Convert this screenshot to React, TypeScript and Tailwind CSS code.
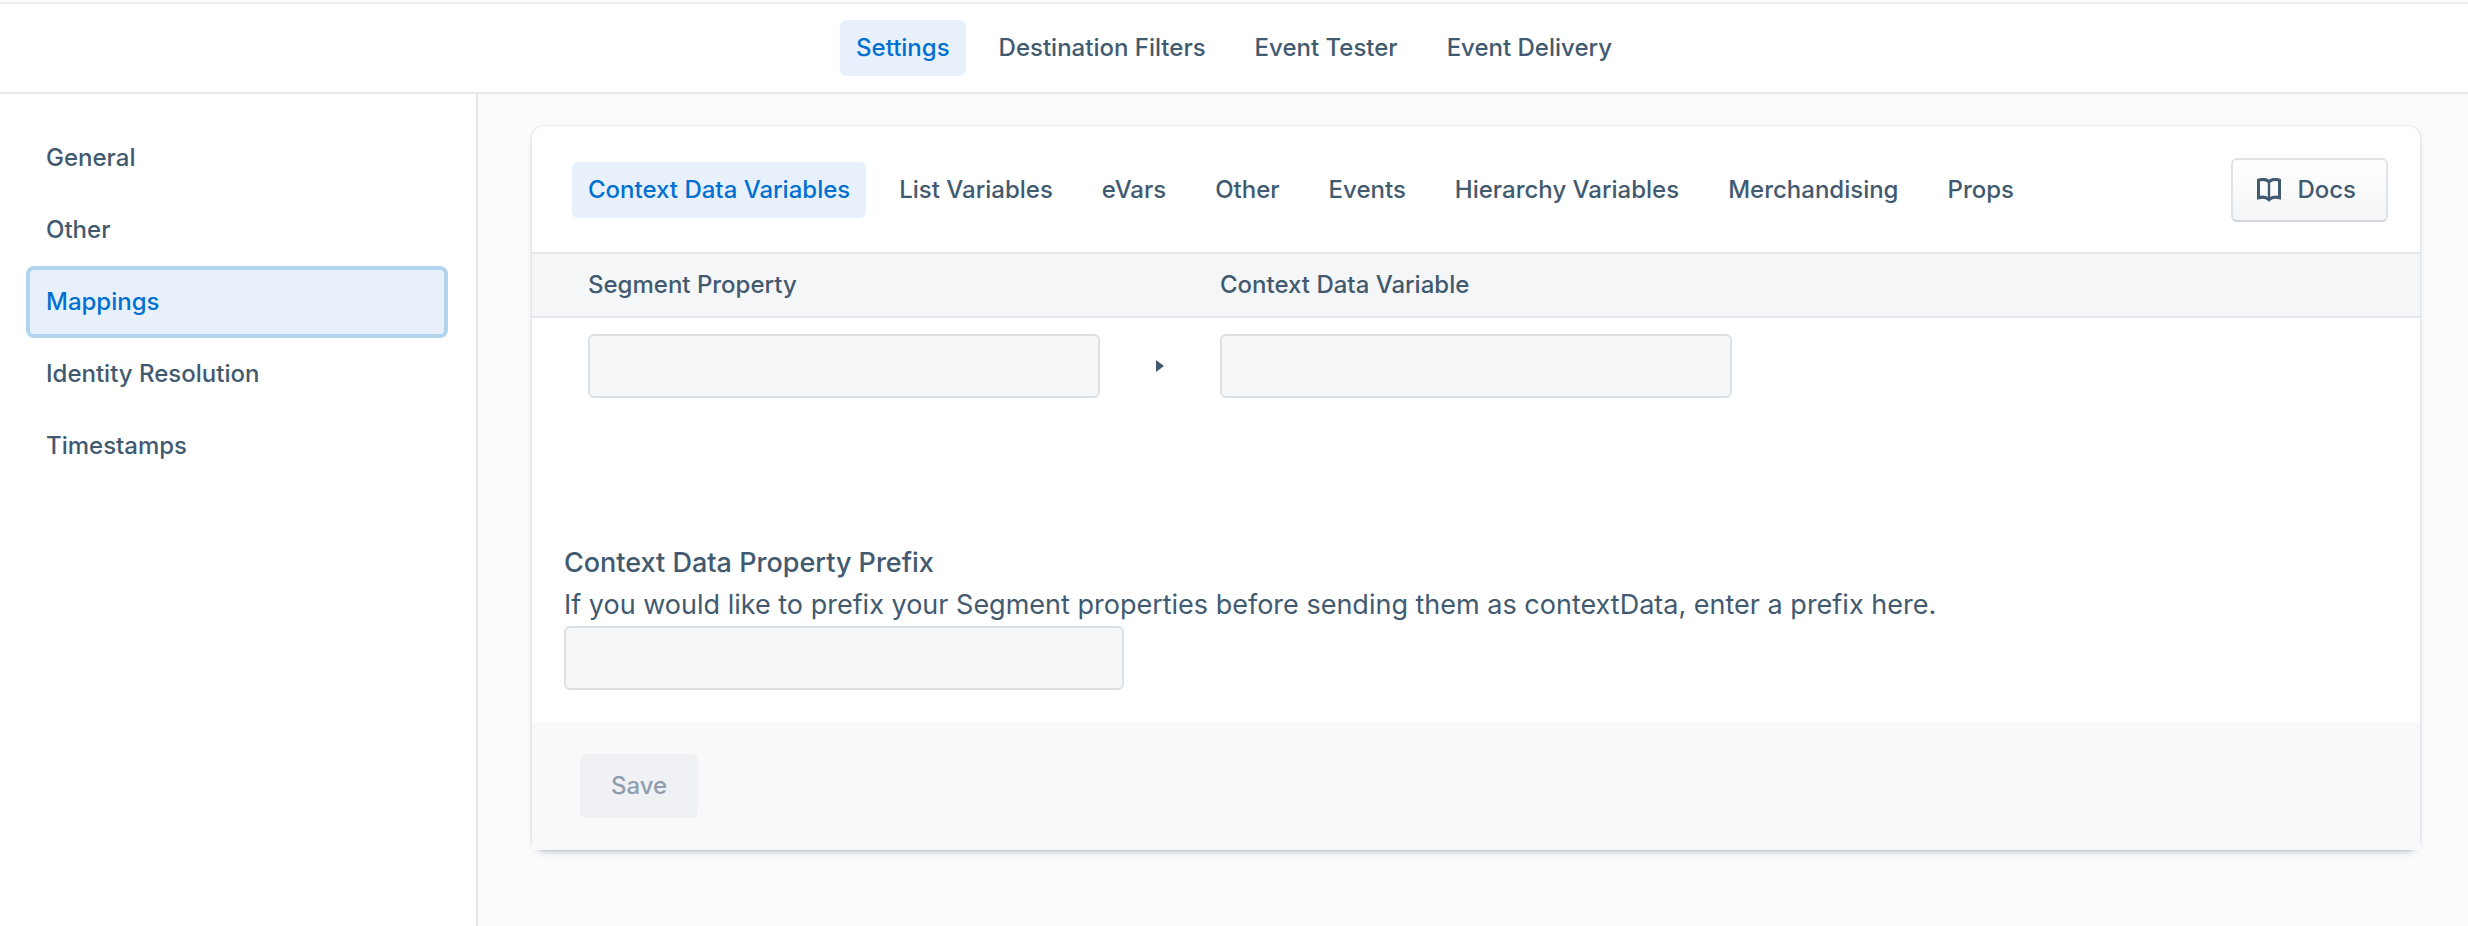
import { useState } from "react";

const destinationTabs = ["Settings", "Destination Filters", "Event Tester", "Event Delivery"];
const sections = ["General", "Other", "Mappings", "Identity Resolution", "Timestamps"];
const mappingTabs = [
  "Context Data Variables",
  "List Variables",
  "eVars",
  "Other",
  "Events",
  "Hierarchy Variables",
  "Merchandising",
  "Props",
];

const fieldClass =
  "block h-16 w-full rounded-md border-2 border-[#dbe0e4] bg-[#f4f6f8] px-4 text-2xl outline-none";

function TabBar({ label, items }: { label: string; items: string[] }) {
  const [current, setCurrent] = useState(items[0]);
  return (
    <nav aria-label={label} className="flex flex-wrap gap-[17px]">
      {items.map((item) => (
        <button
          key={item}
          type="button"
          aria-current={item === current ? "page" : undefined}
          onClick={() => setCurrent(item)}
          className={
            item === current
              ? "h-14 rounded-md bg-[#e8f1fb] px-4 text-[#0070d2]"
              : "h-14 rounded-md px-4"
          }
        >
          {item}
        </button>
      ))}
    </nav>
  );
}

function BookIcon() {
  return (
    <svg
      aria-hidden="true"
      viewBox="0 0 24 24"
      className="size-6"
      fill="none"
      stroke="currentColor"
      strokeWidth="3"
    >
      <path d="M1.5 2.2C5 1 9 1 12 3.6C15 1 19 1 22.5 2.2V19.8C19 18.7 15 18.8 12 21.8C9 18.8 5 18.7 1.5 19.8Z" />
      <path d="M12 3.6V22" strokeWidth="2.4" />
    </svg>
  );
}

function SectionMenu() {
  const [current, setCurrent] = useState("Mappings");
  return (
    <aside className="w-[478px] shrink-0 border-r-2 border-[#e4e8ec] bg-white pt-7 pr-7 pl-[26px]">
      <nav aria-label="Settings sections" className="flex flex-col">
        {sections.map((item) => (
          <button
            key={item}
            type="button"
            aria-current={item === current ? "page" : undefined}
            onClick={() => setCurrent(item)}
            className={
              item === current
                ? "h-18 rounded-lg border-4 border-[#b2d4ee] bg-[#e8f1fb] px-4 text-left text-[#0070d2] outline-none"
                : "h-18 rounded-lg border-4 border-transparent px-4 text-left outline-none"
            }
          >
            {item}
          </button>
        ))}
      </nav>
    </aside>
  );
}

function MappingTable() {
  return (
    <table className="w-full table-fixed border-collapse">
      <colgroup>
        <col className="w-[568px]" />
        <col className="w-[120px]" />
        <col />
      </colgroup>
      <thead>
        <tr className="h-16 border-y-2 border-[#e4e8ec] bg-[#f4f6f8] text-left">
          <th scope="col" className="pl-14 font-medium">
            Segment Property
          </th>
          <td />
          <th scope="col" className="font-medium">
            Context Data Variable
          </th>
        </tr>
      </thead>
      <tbody>
        <tr>
          <td className="pt-4 pl-14">
            <input aria-label="Segment Property" className={fieldClass} />
          </td>
          <td className="pt-4">
            <svg aria-hidden="true" viewBox="0 0 8 12" className="mx-auto h-3 w-2 fill-[#425a70]">
              <path d="M0 0L8 6L0 12Z" />
            </svg>
          </td>
          <td className="pt-4 pr-8">
            <div className="max-w-[512px]">
              <input aria-label="Context Data Variable" className={fieldClass} />
            </div>
          </td>
        </tr>
      </tbody>
    </table>
  );
}

export default function App() {
  return (
    <div className="flex min-h-screen flex-col bg-[#fbfbfb] pt-0.5 font-['Inter',sans-serif] text-2xl font-medium text-[#425a70]">
      <header className="flex justify-center border-y-2 border-[#e4e8ec] border-t-[#ebf0f4] bg-white py-4">
        <TabBar label="Destination" items={destinationTabs} />
      </header>

      <div className="flex flex-1">
        <SectionMenu />

        <main className="min-w-0 flex-1 px-[54px] pt-8 pr-12 pb-8">
          <section className="rounded-xl bg-white shadow-[0_0_2px_rgba(67,90,111,0.3),0_4px_8px_-4px_rgba(67,90,111,0.47)]">
            <div className="flex items-center justify-between gap-4 pt-8 pr-8 pb-[30px] pl-10">
              <TabBar label="Mapping types" items={mappingTabs} />
              <a
                href="#docs"
                className="flex h-16 shrink-0 items-center gap-4 rounded-md border-2 border-[#dfe3e8] border-b-[#d2d6dc] bg-linear-to-b from-white to-[#f4f5f7] pr-[30px] pl-6"
              >
                <BookIcon />
                Docs
              </a>
            </div>

            <MappingTable />

            <div className="px-8 pt-36 pb-8">
              <label htmlFor="prefix" className="block text-[27px] leading-[42px]">
                Context Data Property Prefix
              </label>
              <p id="prefix-help" className="text-[27px] leading-[42px] font-normal">
                If you would like to prefix your Segment properties before sending them as contextData,
                enter a prefix here.
              </p>
              <div className="max-w-[560px]">
                <input id="prefix" aria-describedby="prefix-help" className={fieldClass} />
              </div>
            </div>

            <footer className="bg-[#f9f9fb] px-12 py-8">
              <button type="button" disabled className="h-16 rounded-md bg-[#eff1f5] px-[31px] text-[#8f9eac]">
                Save
              </button>
            </footer>
          </section>
        </main>
      </div>
    </div>
  );
}
